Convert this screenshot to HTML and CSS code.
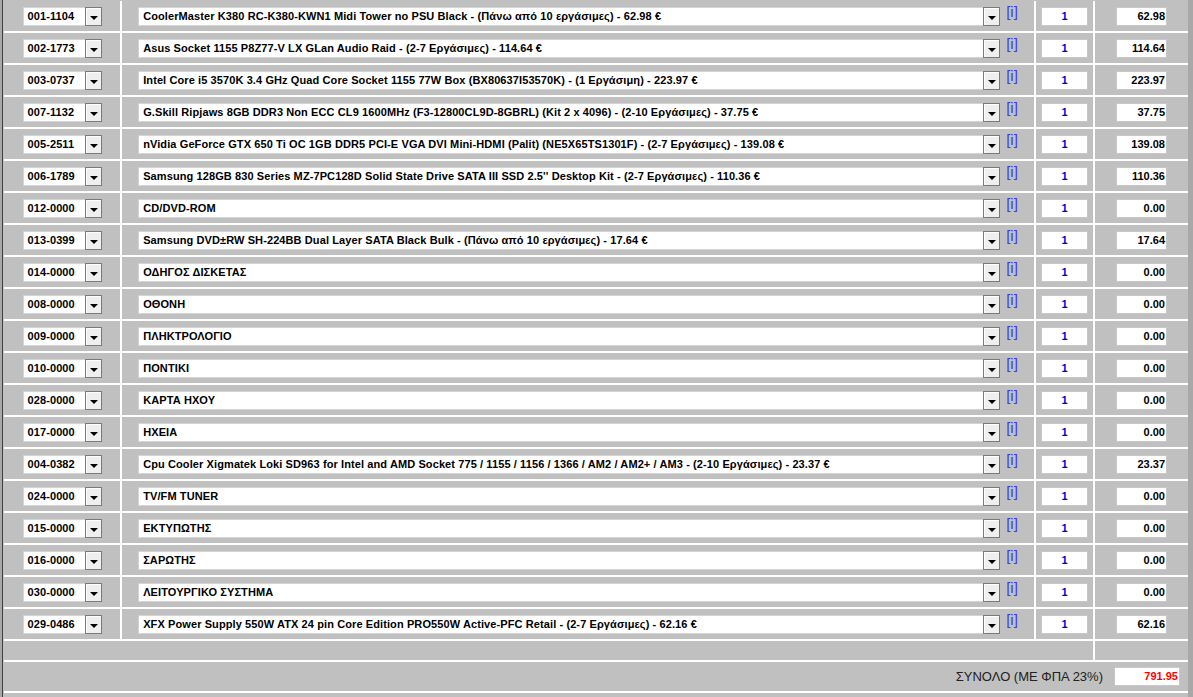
FILE: index.html
```html
<!DOCTYPE html>
<html lang="el">
<head>
    <meta charset="UTF-8">
    <title>Σύνθεση συστήματος</title>
    <link rel="stylesheet" href="styles.css">
</head>
<body>
    <div class="frame">
        <div class="grid">
            <!-- row 1 -->
            <div class="cell"><div class="sel sel-code"><span class="sel-text">001-1104</span><span class="sel-btn"></span></div></div>
            <div class="cell"><div class="sel sel-item"><span class="sel-text">CoolerMaster K380 RC-K380-KWN1 Midi Tower no PSU Black - (Πάνω από 10 εργάσιμες) - 62.98 €</span><span class="sel-btn"></span></div><a class="info" href="#">[i]</a></div>
            <div class="cell"><div class="qty">1</div></div>
            <div class="cell"><div class="price">62.98</div></div>
            <!-- row 2 -->
            <div class="cell"><div class="sel sel-code"><span class="sel-text">002-1773</span><span class="sel-btn"></span></div></div>
            <div class="cell"><div class="sel sel-item"><span class="sel-text">Asus Socket 1155 P8Z77-V LX GLan Audio Raid - (2-7 Εργάσιμες) - 114.64 €</span><span class="sel-btn"></span></div><a class="info" href="#">[i]</a></div>
            <div class="cell"><div class="qty">1</div></div>
            <div class="cell"><div class="price">114.64</div></div>
            <!-- row 3 -->
            <div class="cell"><div class="sel sel-code"><span class="sel-text">003-0737</span><span class="sel-btn"></span></div></div>
            <div class="cell"><div class="sel sel-item"><span class="sel-text">Intel Core i5 3570K 3.4 GHz Quad Core Socket 1155 77W Box (BX80637I53570K) - (1 Εργάσιμη) - 223.97 €</span><span class="sel-btn"></span></div><a class="info" href="#">[i]</a></div>
            <div class="cell"><div class="qty">1</div></div>
            <div class="cell"><div class="price">223.97</div></div>
            <!-- row 4 -->
            <div class="cell"><div class="sel sel-code"><span class="sel-text">007-1132</span><span class="sel-btn"></span></div></div>
            <div class="cell"><div class="sel sel-item"><span class="sel-text">G.Skill Ripjaws 8GB DDR3 Non ECC CL9 1600MHz (F3-12800CL9D-8GBRL) (Kit 2 x 4096) - (2-10 Εργάσιμες) - 37.75 €</span><span class="sel-btn"></span></div><a class="info" href="#">[i]</a></div>
            <div class="cell"><div class="qty">1</div></div>
            <div class="cell"><div class="price">37.75</div></div>
            <!-- row 5 -->
            <div class="cell"><div class="sel sel-code"><span class="sel-text">005-2511</span><span class="sel-btn"></span></div></div>
            <div class="cell"><div class="sel sel-item"><span class="sel-text">nVidia GeForce GTX 650 Ti OC 1GB DDR5 PCI-E VGA DVI Mini-HDMI (Palit) (NE5X65TS1301F) - (2-7 Εργάσιμες) - 139.08 €</span><span class="sel-btn"></span></div><a class="info" href="#">[i]</a></div>
            <div class="cell"><div class="qty">1</div></div>
            <div class="cell"><div class="price">139.08</div></div>
            <!-- row 6 -->
            <div class="cell"><div class="sel sel-code"><span class="sel-text">006-1789</span><span class="sel-btn"></span></div></div>
            <div class="cell"><div class="sel sel-item"><span class="sel-text">Samsung 128GB 830 Series MZ-7PC128D Solid State Drive SATA III SSD 2.5'' Desktop Kit - (2-7 Εργάσιμες) - 110.36 €</span><span class="sel-btn"></span></div><a class="info" href="#">[i]</a></div>
            <div class="cell"><div class="qty">1</div></div>
            <div class="cell"><div class="price">110.36</div></div>
            <!-- row 7 -->
            <div class="cell"><div class="sel sel-code"><span class="sel-text">012-0000</span><span class="sel-btn"></span></div></div>
            <div class="cell"><div class="sel sel-item"><span class="sel-text">CD/DVD-ROM</span><span class="sel-btn"></span></div><a class="info" href="#">[i]</a></div>
            <div class="cell"><div class="qty">1</div></div>
            <div class="cell"><div class="price">0.00</div></div>
            <!-- row 8 -->
            <div class="cell"><div class="sel sel-code"><span class="sel-text">013-0399</span><span class="sel-btn"></span></div></div>
            <div class="cell"><div class="sel sel-item"><span class="sel-text">Samsung DVD±RW SH-224BB Dual Layer SATA Black Bulk - (Πάνω από 10 εργάσιμες) - 17.64 €</span><span class="sel-btn"></span></div><a class="info" href="#">[i]</a></div>
            <div class="cell"><div class="qty">1</div></div>
            <div class="cell"><div class="price">17.64</div></div>
            <!-- row 9 -->
            <div class="cell"><div class="sel sel-code"><span class="sel-text">014-0000</span><span class="sel-btn"></span></div></div>
            <div class="cell"><div class="sel sel-item"><span class="sel-text">ΟΔΗΓΟΣ ΔΙΣΚΕΤΑΣ</span><span class="sel-btn"></span></div><a class="info" href="#">[i]</a></div>
            <div class="cell"><div class="qty">1</div></div>
            <div class="cell"><div class="price">0.00</div></div>
            <!-- row 10 -->
            <div class="cell"><div class="sel sel-code"><span class="sel-text">008-0000</span><span class="sel-btn"></span></div></div>
            <div class="cell"><div class="sel sel-item"><span class="sel-text">ΟΘΟΝΗ</span><span class="sel-btn"></span></div><a class="info" href="#">[i]</a></div>
            <div class="cell"><div class="qty">1</div></div>
            <div class="cell"><div class="price">0.00</div></div>
            <!-- row 11 -->
            <div class="cell"><div class="sel sel-code"><span class="sel-text">009-0000</span><span class="sel-btn"></span></div></div>
            <div class="cell"><div class="sel sel-item"><span class="sel-text">ΠΛΗΚΤΡΟΛΟΓΙΟ</span><span class="sel-btn"></span></div><a class="info" href="#">[i]</a></div>
            <div class="cell"><div class="qty">1</div></div>
            <div class="cell"><div class="price">0.00</div></div>
            <!-- row 12 -->
            <div class="cell"><div class="sel sel-code"><span class="sel-text">010-0000</span><span class="sel-btn"></span></div></div>
            <div class="cell"><div class="sel sel-item"><span class="sel-text">ΠΟΝΤΙΚΙ</span><span class="sel-btn"></span></div><a class="info" href="#">[i]</a></div>
            <div class="cell"><div class="qty">1</div></div>
            <div class="cell"><div class="price">0.00</div></div>
            <!-- row 13 -->
            <div class="cell"><div class="sel sel-code"><span class="sel-text">028-0000</span><span class="sel-btn"></span></div></div>
            <div class="cell"><div class="sel sel-item"><span class="sel-text">ΚΑΡΤΑ ΗΧΟΥ</span><span class="sel-btn"></span></div><a class="info" href="#">[i]</a></div>
            <div class="cell"><div class="qty">1</div></div>
            <div class="cell"><div class="price">0.00</div></div>
            <!-- row 14 -->
            <div class="cell"><div class="sel sel-code"><span class="sel-text">017-0000</span><span class="sel-btn"></span></div></div>
            <div class="cell"><div class="sel sel-item"><span class="sel-text">ΗΧΕΙΑ</span><span class="sel-btn"></span></div><a class="info" href="#">[i]</a></div>
            <div class="cell"><div class="qty">1</div></div>
            <div class="cell"><div class="price">0.00</div></div>
            <!-- row 15 -->
            <div class="cell"><div class="sel sel-code"><span class="sel-text">004-0382</span><span class="sel-btn"></span></div></div>
            <div class="cell"><div class="sel sel-item"><span class="sel-text">Cpu Cooler Xigmatek Loki SD963 for Intel and AMD Socket 775 / 1155 / 1156 / 1366 / AM2 / AM2+ / AM3 - (2-10 Εργάσιμες) - 23.37 €</span><span class="sel-btn"></span></div><a class="info" href="#">[i]</a></div>
            <div class="cell"><div class="qty">1</div></div>
            <div class="cell"><div class="price">23.37</div></div>
            <!-- row 16 -->
            <div class="cell"><div class="sel sel-code"><span class="sel-text">024-0000</span><span class="sel-btn"></span></div></div>
            <div class="cell"><div class="sel sel-item"><span class="sel-text">TV/FM TUNER</span><span class="sel-btn"></span></div><a class="info" href="#">[i]</a></div>
            <div class="cell"><div class="qty">1</div></div>
            <div class="cell"><div class="price">0.00</div></div>
            <!-- row 17 -->
            <div class="cell"><div class="sel sel-code"><span class="sel-text">015-0000</span><span class="sel-btn"></span></div></div>
            <div class="cell"><div class="sel sel-item"><span class="sel-text">ΕΚΤΥΠΩΤΗΣ</span><span class="sel-btn"></span></div><a class="info" href="#">[i]</a></div>
            <div class="cell"><div class="qty">1</div></div>
            <div class="cell"><div class="price">0.00</div></div>
            <!-- row 18 -->
            <div class="cell"><div class="sel sel-code"><span class="sel-text">016-0000</span><span class="sel-btn"></span></div></div>
            <div class="cell"><div class="sel sel-item"><span class="sel-text">ΣΑΡΩΤΗΣ</span><span class="sel-btn"></span></div><a class="info" href="#">[i]</a></div>
            <div class="cell"><div class="qty">1</div></div>
            <div class="cell"><div class="price">0.00</div></div>
            <!-- row 19 -->
            <div class="cell"><div class="sel sel-code"><span class="sel-text">030-0000</span><span class="sel-btn"></span></div></div>
            <div class="cell"><div class="sel sel-item"><span class="sel-text">ΛΕΙΤΟΥΡΓΙΚΟ ΣΥΣΤΗΜΑ</span><span class="sel-btn"></span></div><a class="info" href="#">[i]</a></div>
            <div class="cell"><div class="qty">1</div></div>
            <div class="cell"><div class="price">0.00</div></div>
            <!-- row 20 -->
            <div class="cell"><div class="sel sel-code"><span class="sel-text">029-0486</span><span class="sel-btn"></span></div></div>
            <div class="cell"><div class="sel sel-item"><span class="sel-text">XFX Power Supply 550W ATX 24 pin Core Edition PRO550W Active-PFC Retail - (2-7 Εργάσιμες) - 62.16 €</span><span class="sel-btn"></span></div><a class="info" href="#">[i]</a></div>
            <div class="cell"><div class="qty">1</div></div>
            <div class="cell"><div class="price">62.16</div></div>

            <!-- spacer row -->
            <div class="cell span-3"></div>
            <div class="cell"></div>

            <!-- total -->
            <div class="cell span-4 total-cell">
                <span class="total-label">ΣΥΝΟΛΟ (ΜΕ ΦΠΑ 23%)</span>
                <div class="total">791.95</div>
            </div>

            <div class="cell span-4"></div>
        </div>
    </div>
</body>
</html>
```

FILE: styles.css
```css
body {
    margin: 0;
    background: #a8a8a8;
    font-family: "Liberation Sans", Arial, sans-serif;
    font-size: 11px;
    color: #000;
    overflow: hidden;
}

.frame {
    display: inline-block;
    margin-left: 2px;
    border-left: 1px solid #404040;
    padding: 1px 0 0 1px;
    background: #c0c0c0;
}

.grid {
    display: grid;
    grid-template-columns: 116px 912px 57px 93px;
    grid-template-rows: repeat(20, 30px) 19px 29px 30px;
    gap: 2px;
    background: #ffffff;
}

.cell {
    background: #c0c0c0;
    display: flex;
    align-items: center;
    justify-content: center;
}

.span-3 {
    grid-column: span 3;
}

.span-4 {
    grid-column: span 4;
}

/* fake select box */
.sel {
    display: flex;
    height: 19px;
    background: #fff;
    border: 1px solid #d4d4d4;
    box-sizing: border-box;
}

.sel-code {
    width: 79px;
}

.sel-item {
    width: 862px;
}

.sel-text {
    flex: 1;
    padding-left: 4px;
    font-weight: bold;
    line-height: 17px;
    letter-spacing: 0.1px;
    white-space: nowrap;
    overflow: hidden;
}

.sel-btn {
    position: relative;
    width: 15px;
    margin: -1px -1px -1px 0;
    border: 1px solid #7a7a7a;
    background: #efefef;
    box-shadow: inset 1px 1px 0 #fff;
}

.sel-btn::after {
    content: "";
    position: absolute;
    left: 4px;
    top: 8px;
    border-left: 4px solid transparent;
    border-right: 4px solid transparent;
    border-top: 4px solid #000;
}

.info {
    align-self: flex-start;
    margin: 3px 0 0 6px;
    color: #3a3aff;
    font-size: 15px;
    text-decoration: none;
    line-height: 15px;
}

.qty,
.price,
.total {
    height: 19px;
    box-sizing: border-box;
    background: #fff;
    border: 1px solid #c8c8c8;
    font-weight: bold;
    line-height: 17px;
}

.qty {
    width: 47px;
    text-align: center;
    color: #0000e0;
}

.price {
    width: 51px;
    text-align: right;
    padding-right: 1px;
}

.total-cell {
    justify-content: flex-end;
    padding-right: 8px;
}

.total-label {
    font-size: 13px;
    color: #222;
    margin-right: 11px;
}

.total {
    width: 66px;
    text-align: right;
    padding-right: 1px;
    color: #ff0000;
}
```
